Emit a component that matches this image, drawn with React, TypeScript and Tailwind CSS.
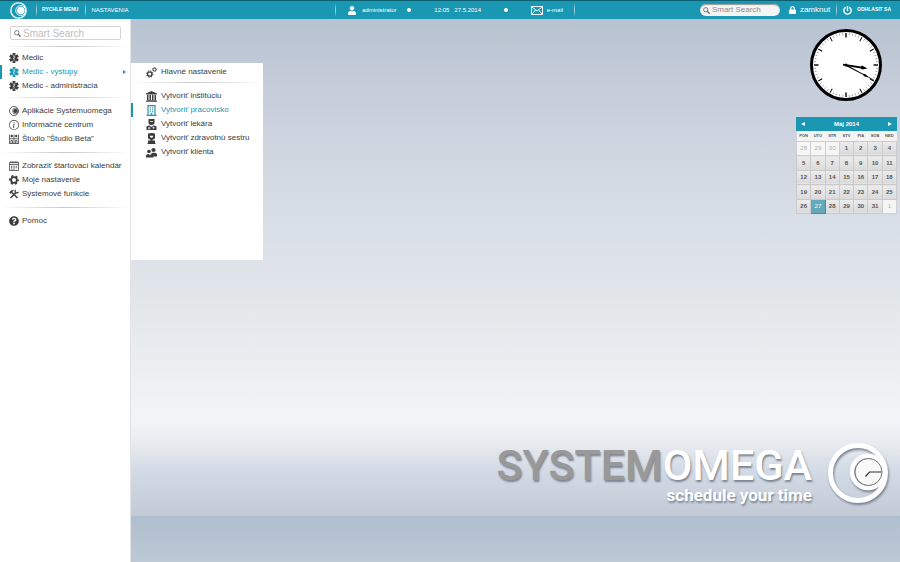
import React from "react";
import clsx from "clsx";
import { FaUser, FaLock, FaPowerOff, FaQuestionCircle } from "react-icons/fa";
import { BsInfoCircle } from "react-icons/bs";

type IconType = React.ComponentType<{ className?: string }>;

interface MenuItem {
  label: string;
  icon: IconType;
  active?: boolean;
}

function BrandIcon({ className }: { className?: string }) {
  return (
    <svg viewBox="0 0 20 20" className={className} fill="none" stroke="currentColor" aria-hidden="true">
      <circle cx="10" cy="10" r="9" strokeWidth="1.6" />
      <circle cx="12.6" cy="10" r="5.8" strokeWidth="1.1" />
      <circle cx="12.8" cy="10" r="4" fill="currentColor" />
    </svg>
  );
}

function SearchIcon({ className }: { className?: string }) {
  return (
    <svg viewBox="0 0 14 14" className={className} fill="none" stroke="currentColor" aria-hidden="true">
      <circle cx="5.5" cy="5.5" r="4.3" strokeWidth="1.5" />
      <path d="M8.8 8.800l4.200 4.200" strokeWidth="2.600" />
    </svg>
  );
}

function MedicIcon({ className }: { className?: string }) {
  return (
    <svg viewBox="0 0 20 22" className={className} fill="none" aria-hidden="true">
      <path d="M10 0v22M1 5.500l18 11M19 5.500l-18 11" stroke="currentColor" strokeWidth="6.200" />
      <path d="M10 3.500v15M8 7.500q4-2 4 1t-3 2.500 2.500 4" stroke="#fff" strokeWidth="1" />
    </svg>
  );
}

function StudioIcon({ className }: { className?: string }) {
  return (
    <svg viewBox="0 0 20 20" className={className} fill="none" stroke="currentColor" strokeWidth="1.5" aria-hidden="true">
      <path d="M1 1v18M10 1v18M19 1v18M1 9.500h18M0 19h20" />
      <circle cx="5.500" cy="4" r="1.800" fill="currentColor" />
      <circle cx="14.500" cy="4" r="1.800" fill="currentColor" />
      <path d="M4 19v-6h3v6M13 19v-6h3v6" />
    </svg>
  );
}

function CalendarIcon({ className }: { className?: string }) {
  return (
    <svg viewBox="0 0 20 20" className={className} fill="none" stroke="currentColor" strokeWidth="1.5" aria-hidden="true">
      <path d="M1 3h18v16H1zM1 7h18" />
      <path d="M4 0v4.500M8 0v4.500M12 0v4.500M16 0v4.500" strokeWidth="1.600" />
      <path d="M4 10.500h12M4 13.500h12M4 16.300h8" strokeDasharray="2 1.300" strokeWidth="1.700" />
    </svg>
  );
}

function GearIcon({ className }: { className?: string }) {
  return (
    <svg viewBox="0 0 20 20" className={className} fill="none" stroke="currentColor" aria-hidden="true">
      <circle cx="10" cy="10" r="5.800" strokeWidth="3.600" />
      <circle cx="10" cy="10" r="8.400" strokeWidth="3" strokeDasharray="4.400 4.396" strokeDashoffset="2.200" />
    </svg>
  );
}

function ToolsIcon({ className }: { className?: string }) {
  return (
    <svg viewBox="0 0 20 20" className={className} fill="none" stroke="currentColor" aria-hidden="true">
      <path d="M6 7l11 11M14 7L3 18" strokeWidth="3" />
      <path d="M1 7q2-5 8-5L4 9z" fill="currentColor" />
      <path d="M13 1.500q-2 3 0 5.500 3 2 6-1" strokeWidth="2.600" />
    </svg>
  );
}

function GearsIcon({ className }: { className?: string }) {
  return (
    <svg viewBox="0 0 22 22" className={className} fill="none" stroke="currentColor" aria-hidden="true">
      <circle cx="7.500" cy="14" r="4.400" strokeWidth="2.600" />
      <circle cx="7.500" cy="14" r="6.400" strokeWidth="2" strokeDasharray="2.500 2.526" />
      <circle cx="17" cy="5" r="2.800" strokeWidth="2" />
      <circle cx="17" cy="5" r="4.200" strokeWidth="1.500" strokeDasharray="1.650 1.649" />
    </svg>
  );
}

function InstitutionIcon({ className }: { className?: string }) {
  return (
    <svg viewBox="0 0 22 22" className={className} fill="currentColor" aria-hidden="true">
      <path d="M11 0l11 5v2H0V5z" />
      <path d="M2 8h3v10H2zM7 8h3v10H7zM12 8h3v10h-3zM17 8h3v10h-3zM1 18h20v1.500H1zM0 20.300h22V22H0z" />
    </svg>
  );
}

function BuildingIcon({ className }: { className?: string }) {
  return (
    <svg viewBox="0 0 20 22" className={className} fill="none" stroke="currentColor" strokeWidth="2.400" aria-hidden="true">
      <path d="M3 21V1.200h14V21M0 20.800h20" />
      <path d="M6.500 5.500h2.500M11 5.500h2.500M6.500 9.500h2.500M11 9.500h2.500M6.500 13.500h2.500M11 13.500h2.500" />
      <path d="M10 21v-5" strokeWidth="3" />
    </svg>
  );
}

function DoctorIcon({ className }: { className?: string }) {
  return (
    <svg viewBox="0 0 20 22" className={className} fill="currentColor" aria-hidden="true">
      <path d="M4 0h12v7a6 5 0 0 1-12 0z" />
      <path d="M7 4.500h6V6H7z" fill="#fff" />
      <path d="M0 22v-6q0-3 6-3l4 3 4-3q6 0 6 3v6z" />
      <path d="M11.500 17.500h5M14 15v5M4 17h3v3H4z" stroke="#fff" strokeWidth="1.200" fill="none" />
    </svg>
  );
}

function NurseIcon({ className }: { className?: string }) {
  return (
    <svg viewBox="0 0 20 22" className={className} fill="currentColor" aria-hidden="true">
      <path d="M3 1q7-2 14 0v9q-1 3-5 3v2h5v5H3v-5h5v-2q-4 0-5-3z" />
      <path d="M7 5.500h6V8q-3 3-6 0z" fill="#fff" />
      <path d="M2 20h16v2H2z" />
    </svg>
  );
}

function ClientsIcon({ className }: { className?: string }) {
  return (
    <svg viewBox="0 0 22 20" className={className} fill="currentColor" aria-hidden="true">
      <circle cx="15" cy="5" r="4.200" />
      <path d="M10 11q10-2 12 2v5H13z" />
      <circle cx="6" cy="8" r="3.600" />
      <path d="M0 20v-4q1-3 5-3l3 2 3-2q4 1 4 4v3z" />
      <path d="M9 13l3-3" stroke="#fff" strokeWidth="1.200" />
    </svg>
  );
}

const sections: MenuItem[][] = [
  [
    { label: "Medic", icon: MedicIcon },
    { label: "Medic - výstupy", icon: MedicIcon, active: true },
    { label: "Medic - administracia", icon: MedicIcon },
  ],
  [
    { label: "Aplikácie Systémuomega", icon: BrandIcon },
    { label: "Informačné centrum", icon: BsInfoCircle },
    { label: 'Štúdio "Študio Beta"', icon: StudioIcon },
  ],
  [
    { label: "Zobraziť štartovací kalendár", icon: CalendarIcon },
    { label: "Moje nastavenie", icon: GearIcon },
    { label: "Sýstemové funkcie", icon: ToolsIcon },
  ],
  [{ label: "Pomoc", icon: FaQuestionCircle }],
];

const submenu: MenuItem[] = [
  { label: "Vytvoriť inštitúciu", icon: InstitutionIcon },
  { label: "Vytvoriť pracovisko", icon: BuildingIcon, active: true },
  { label: "Vytvoriť lekára", icon: DoctorIcon },
  { label: "Vytvoriť zdravotnú sestru", icon: NurseIcon },
  { label: "Vytvoriť klienta", icon: ClientsIcon },
];

const weekdays = ["PON", "UTO", "STR", "STV", "PIA", "SOB", "NED"];
const weeks = [
  [28, 29, 30, 1, 2, 3, 4],
  [5, 6, 7, 8, 9, 10, 11],
  [12, 13, 14, 15, 16, 17, 18],
  [19, 20, 21, 22, 23, 24, 25],
  [26, 27, 28, 29, 30, 31, 1],
];

function Separator() {
  return <div className="h-px bg-linear-to-r from-transparent via-[#c8c8c8] to-transparent" />;
}

function Divider() {
  return <span className="h-3.5 w-px bg-linear-to-b from-[#1a97b3] via-[#a5d5df] to-[#1a97b3]" />;
}

function TopBar() {
  return (
    <header className="grid h-[19px] grid-cols-[1fr_240px_1fr] items-center border-t border-[#0b5d70] bg-[#1a97b3] pl-[10px] text-white">
      <nav className="flex items-center">
        <a href="#" aria-label="Systemomega">
          <BrandIcon className="h-[17px] w-[17px]" />
        </a>
        <div className="ml-[9px] flex items-center gap-[5px] text-[6px]">
          <Divider />
          <a href="#" className="pr-[2px] text-[5px] font-bold">RYCHLE MENU</a>
          <Divider />
          <a href="#">NASTAVENIA</a>
        </div>
      </nav>

      <div className="flex items-center justify-between text-[6px]">
        <Divider />
        <a href="#" className="flex items-center gap-[5px]">
          <FaUser className="h-[9px] w-[10px]" />
          administrator
        </a>
        <span className="h-1 w-1 rounded-full bg-white" />
        <span className="px-3 whitespace-pre">12:05   27.5.2014</span>
        <span className="h-1 w-1 rounded-full bg-white" />
        <a href="#" className="ml-3 flex items-center gap-1">
          <svg viewBox="0 0 24 18" className="h-[9px] w-3" fill="none" stroke="currentColor" strokeWidth="1.800">
            <rect x="1" y="1" width="22" height="16" />
            <path d="M2 2l10 8 10-8M2 16l7-8M22 16l-7-8" />
          </svg>
          e-mail
        </a>
        <Divider />
      </div>

      <div className="flex items-center justify-end pr-[9px]">
        <label className="flex h-3 w-20 items-center gap-[2px] rounded-full bg-[#f4f4f4] px-[3px] shadow-[inset_0_1px_1px_#999]">
          <SearchIcon className="h-[7px] w-[7px] shrink-0 text-[#555]" />
          <input
            type="text"
            aria-label="Smart Search"
            placeholder="Smart Search"
            className="w-full min-w-0 bg-transparent text-[8px] outline-none placeholder:text-[#8c8c8c]"
          />
        </label>
        <button className="ml-[9px] flex items-center gap-1 text-[8px]">
          <FaLock className="h-2 w-[7px]" />
          zamknut
        </button>
        <div className="ml-1.5 flex items-center gap-1.5">
          <Divider />
          <button className="flex items-center gap-[5px] text-[5px] font-bold">
            <FaPowerOff className="h-[9px] w-[9px]" />
            ODHLASIT SA
          </button>
        </div>
      </div>
    </header>
  );
}

function Sidebar() {
  return (
    <aside className="w-[131px] shrink-0 border-r border-[#e2e4e8] bg-white pt-[7px]">
      <label className="mr-[9px] mb-1.5 ml-[10px] flex h-3.5 items-center gap-[2px] rounded-xs border border-[#d4d4d4] px-[3px]">
        <SearchIcon className="h-[7px] w-[7px] shrink-0 text-[#555]" />
        <input
          type="text"
          aria-label="Smart Search"
          placeholder="Smart Search"
          className="w-full min-w-0 text-[10px] outline-none placeholder:text-[#c0c0c0]"
        />
      </label>
      {sections.map((items, index) => (
        <nav key={index}>
          <Separator />
          <ul className={index === 0 ? "py-1" : "py-1.5"}>
            {items.map(({ label, icon: Icon, active }) => (
              <li key={label}>
                <a
                  href="#"
                  className={clsx(
                    "flex h-3.5 items-center gap-[3px] border-l-2 pr-1 pl-[7px] whitespace-nowrap",
                    active ? "border-[#1a97b3] text-[#1a97b3]" : "border-transparent"
                  )}
                >
                  <Icon className="h-[10px] w-[10px] shrink-0" />
                  {label}
                  {active && <span className="ml-auto border-y-2 border-l-3 border-y-transparent border-l-[#1a97b3]" />}
                </a>
              </li>
            ))}
          </ul>
        </nav>
      ))}
    </aside>
  );
}

function Submenu() {
  return (
    <section className="mt-11 h-[197px] w-[132px] bg-white pt-[2px]">
      <h2 className="flex h-3.5 items-center gap-1 pl-[15px]">
        <GearsIcon className="h-[11px] w-[11px]" />
        Hlavné nastavenie
      </h2>
      <div className="pt-[3px] pb-1.5">
        <Separator />
      </div>
      <ul>
        {submenu.map(({ label, icon: Icon, active }) => (
          <li key={label}>
            <a
              href="#"
              className={clsx(
                "flex h-3.5 items-center gap-1 border-l-2 pl-[13px] whitespace-nowrap",
                active ? "border-[#1a97b3] text-[#1a97b3]" : "border-transparent"
              )}
            >
              <Icon className="h-[11px] w-[11px] shrink-0" />
              {label}
            </a>
          </li>
        ))}
      </ul>
    </section>
  );
}

function Clock() {
  const ticks = Array.from({ length: 60 }, (_, i) => i);
  return (
    <svg viewBox="0 0 72 72" className="mr-[15px] h-[72px] w-[72px]" role="img" aria-label="Hodiny">
      <circle cx="36" cy="36" r="34.5" fill="#fff" stroke="#000" strokeWidth="3" />
      {ticks.map((i) => (
        <line
          key={i}
          x1="36"
          y1="4"
          x2="36"
          y2={i % 5 === 0 ? 8.5 : 6}
          stroke={i % 5 === 0 ? "#000" : "#555"}
          strokeWidth={i % 15 === 0 ? 1.4 : i % 5 === 0 ? 0.9 : 0.5}
          transform={`rotate(${i * 6} 36 36)`}
        />
      ))}
      <path d="M33 34.800l18 2.600 1-.900 5.500 3-5.800.900-.700-1L33 36.500z" />
      <path d="M35 35l18 9.800 2 .200 5 4-6-1.800-1-1.400L35 36.500z" />
      <path d="M59 48.400l5 2.800" stroke="#000" strokeWidth=".7" />
      <circle cx="36" cy="36" r="1.500" />
    </svg>
  );
}

function Calendar() {
  return (
    <div className="w-[101px] text-[6px]">
      <div className="flex h-3.5 items-center justify-between bg-[#1a97b3] px-[5px] font-bold text-white">
        <button aria-label="Predchádzajúci mesiac" className="border-y-2 border-r-4 border-y-transparent border-r-white" />
        Máj 2014
        <button aria-label="Nasledujúci mesiac" className="border-y-2 border-l-4 border-y-transparent border-l-white" />
      </div>
      <table className="h-[83px] w-full table-fixed border-collapse text-center text-[#555]">
        <thead>
          <tr className="h-[10px] bg-[#f4f4f4] text-[4px] leading-none">
            {weekdays.map((day) => (
              <th key={day} className="font-bold">{day}</th>
            ))}
          </tr>
        </thead>
        <tbody>
          {weeks.map((week, row) => (
            <tr key={row}>
              {week.map((day, col) => {
                const outside = (row === 0 && day > 7) || (row === 4 && day < 7);
                return (
                  <td
                    key={col}
                    className={clsx(
                      "border p-0 leading-none",
                      outside && "border-[#cfcfcf] bg-[#f6f6f6] text-[#b0b0b0]",
                      !outside && day === 27 && "border-[#3f8fa3] bg-[#63a9bb] text-white",
                      !outside && day !== 27 && "border-[#cacaca] bg-linear-to-b from-[#ececec] to-[#dadada] font-bold"
                    )}
                  >
                    {day}
                  </td>
                );
              })}
            </tr>
          ))}
        </tbody>
      </table>
    </div>
  );
}

function Logo() {
  return (
    <div className="mr-[10px] flex items-center gap-[14px] text-white">
      <div className="text-right font-[Roboto,sans-serif] text-shadow-[1px_2px_2px_#7c8494]">
        <p className="text-[43px] leading-[44px] font-medium">
          <span className="text-[#999]">SYSTEM</span>OMEGA
        </p>
        <p className="text-[17px] leading-[16px] font-bold">schedule your time</p>
      </div>
      <svg viewBox="0 0 64 64" className="h-16 w-16 drop-shadow-[1px_2px_1px_#7c8494]" fill="none" aria-hidden="true">
        <circle cx="32" cy="32" r="27.500" stroke="#fff" strokeWidth="5" />
        <circle cx="42" cy="31" r="16" stroke="#fff" strokeWidth="4.500" />
        <circle cx="42.500" cy="31" r="13.500" fill="#f8f8f9" stroke="#777" strokeWidth="1" />
        <path d="M39.500 35.500l4-4.500h12" stroke="#333" strokeWidth="1.200" />
      </svg>
    </div>
  );
}

export default function App() {
  return (
    <div className="flex min-h-screen flex-col font-['Liberation_Sans',Arial,sans-serif] text-[8px] text-[#3c3c3c]">
      <TopBar />
      <div className="flex flex-1">
        <Sidebar />
        <main className="flex flex-1 flex-col">
          <div className="flex flex-1 items-stretch justify-between bg-[linear-gradient(#b7c3d0_0%,#c6cddb_14%,#cfd6e0_26%,#dbe1ea_45%,#e2e6e9_56%,#f3f4f8_81%,#e6e9ee_86%,#d2dae5_91%,#c3cad6_100%)]">
            <Submenu />
            <div className="flex flex-col items-end justify-between pt-[10px] pb-[11px]">
              <div className="flex flex-col items-end gap-4 pr-[3px]">
                <Clock />
                <Calendar />
              </div>
              <Logo />
            </div>
          </div>
          <div className="h-[46px] bg-linear-to-b from-[#afbece] to-[#bdc9d5]" />
        </main>
      </div>
    </div>
  );
}
